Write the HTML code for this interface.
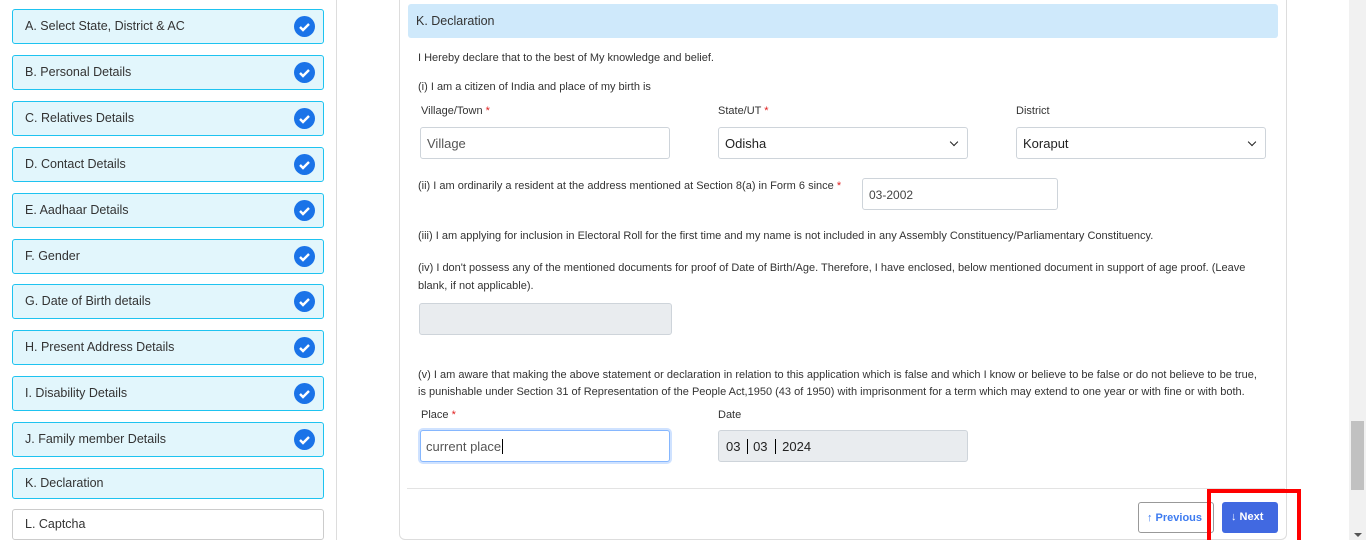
<!DOCTYPE html>
<html><head><style>
*{box-sizing:border-box;margin:0;padding:0}
body{width:1366px;height:540px;overflow:hidden;background:#fff;font-family:"Liberation Sans",Arial,sans-serif;color:#333;position:relative}
.a{position:absolute}
.item{position:absolute;left:12px;width:312px;height:35px;border:1px solid #1ec3f0;background:#e2f6fc;border-radius:3px;font-size:12.5px;color:#333;padding:9px 12px;}
.chk{position:absolute;right:8px;top:6px;width:21px;height:21px;border-radius:50%;background:#1a73e8}
.t{position:absolute;font-size:11px;color:#333;white-space:nowrap}
.lbl{position:absolute;font-size:11px;color:#333}
.req{color:#e02020}
.inp{position:absolute;height:32px;border:1px solid #ced4da;border-radius:3px;background:#fff;font-size:13px;color:#444;padding:8px 6px}
.sel:after{content:"";position:absolute;right:10px;top:11px;width:5px;height:5px;border-right:1.5px solid #222;border-bottom:1.5px solid #222;transform:rotate(45deg)}
</style></head><body>
<div class="item" style="top:9px">A. Select State, District &amp; AC<div class="chk"><svg width="21" height="21"><path d="M6 11l3 3 6-6" stroke="#fff" stroke-width="2.4" fill="none"/></svg></div></div>
<div class="item" style="top:55px">B. Personal Details<div class="chk"><svg width="21" height="21"><path d="M6 11l3 3 6-6" stroke="#fff" stroke-width="2.4" fill="none"/></svg></div></div>
<div class="item" style="top:101px">C. Relatives Details<div class="chk"><svg width="21" height="21"><path d="M6 11l3 3 6-6" stroke="#fff" stroke-width="2.4" fill="none"/></svg></div></div>
<div class="item" style="top:147px">D. Contact Details<div class="chk"><svg width="21" height="21"><path d="M6 11l3 3 6-6" stroke="#fff" stroke-width="2.4" fill="none"/></svg></div></div>
<div class="item" style="top:193px">E. Aadhaar Details<div class="chk"><svg width="21" height="21"><path d="M6 11l3 3 6-6" stroke="#fff" stroke-width="2.4" fill="none"/></svg></div></div>
<div class="item" style="top:239px">F. Gender<div class="chk"><svg width="21" height="21"><path d="M6 11l3 3 6-6" stroke="#fff" stroke-width="2.4" fill="none"/></svg></div></div>
<div class="item" style="top:284px">G. Date of Birth details<div class="chk"><svg width="21" height="21"><path d="M6 11l3 3 6-6" stroke="#fff" stroke-width="2.4" fill="none"/></svg></div></div>
<div class="item" style="top:330px">H. Present Address Details<div class="chk"><svg width="21" height="21"><path d="M6 11l3 3 6-6" stroke="#fff" stroke-width="2.4" fill="none"/></svg></div></div>
<div class="item" style="top:376px">I. Disability Details<div class="chk"><svg width="21" height="21"><path d="M6 11l3 3 6-6" stroke="#fff" stroke-width="2.4" fill="none"/></svg></div></div>
<div class="item" style="top:422px">J. Family member Details<div class="chk"><svg width="21" height="21"><path d="M6 11l3 3 6-6" stroke="#fff" stroke-width="2.4" fill="none"/></svg></div></div>
<div class="item" style="top:468px;height:31px;padding-top:7px">K. Declaration</div>
<div class="item" style="top:509px;height:31px;padding-top:7px;background:#fff;border-color:#ccc">L. Captcha</div>

<div class="a" style="left:336px;top:0;width:1px;height:540px;background:#ddd"></div>
<div class="a" style="left:399px;top:0;width:888px;height:540px;border:1px solid #ddd;border-top:none;border-radius:0 0 6px 6px"></div>
<div class="a" style="left:408px;top:4px;width:870px;height:34px;background:#cfe9fb;border-radius:3px;font-size:12.5px;padding:10px 8px;color:#333">K. Declaration</div>

<div class="t" style="left:418px;top:52px">I Hereby declare that to the best of My knowledge and belief.</div>
<div class="t" style="left:418px;top:81px">(i) I am a citizen of India and place of my birth is</div>
<div class="lbl" style="left:421px;top:105px">Village/Town <span class="req">*</span></div>
<div class="lbl" style="left:718px;top:105px">State/UT <span class="req">*</span></div>
<div class="lbl" style="left:1016px;top:105px">District</div>
<div class="inp" style="left:420px;top:127px;width:250px;color:#555">Village</div>
<div class="inp sel" style="left:718px;top:127px;width:250px;color:#222">Odisha</div>
<div class="inp sel" style="left:1016px;top:127px;width:250px;color:#222">Koraput</div>

<div class="t" style="left:418px;top:180px">(ii) I am ordinarily a resident at the address mentioned at Section 8(a) in Form 6 since <span class="req">*</span></div>
<div class="inp" style="left:862px;top:178px;width:196px;height:32px;font-size:12px;padding-top:9px">03-2002</div>

<div class="t" style="left:418px;top:230px">(iii) I am applying for inclusion in Electoral Roll for the first time and my name is not included in any Assembly Constituency/Parliamentary Constituency.</div>
<div class="t" style="left:418px;top:259px;line-height:18px">(iv) I don't possess any of the mentioned documents for proof of Date of Birth/Age. Therefore, I have enclosed, below mentioned document in support of age proof. (Leave<br>blank, if not applicable).</div>
<div class="inp" style="left:419px;top:303px;width:253px;height:32px;background:#e9ecef"></div>

<div class="t" style="left:418px;top:367px;line-height:17px">(v) I am aware that making the above statement or declaration in relation to this application which is false and which I know or believe to be false or do not believe to be true,<br>is punishable under Section 31 of Representation of the People Act,1950 (43 of 1950) with imprisonment for a term which may extend to one year or with fine or with both.</div>
<div class="lbl" style="left:421px;top:409px">Place <span class="req">*</span></div>
<div class="lbl" style="left:718px;top:409px">Date</div>
<div class="inp" style="left:420px;top:430px;width:250px;border-color:#86b7fe;box-shadow:0 0 0 2px #cfe2ff;color:#555;padding-left:5px">current place<span style="border-left:1px solid #000;margin-left:1px"></span></div>
<div class="inp" style="left:718px;top:430px;width:250px;background:#e9ecef;color:#222;padding-left:7px">03 <span style="border-left:1px solid #000;margin:0 5px 0 3px"></span>03 <span style="border-left:1px solid #000;margin:0 6px 0 4px"></span>2024</div>

<div class="a" style="left:407px;top:488px;width:878px;height:1px;background:#e3e3e3"></div>
<div class="a" style="left:1138px;top:502px;width:76px;height:31px;border:1px solid #999;border-radius:3px;color:#3d7bf0;font-size:11px;font-weight:bold;padding:9px 0 0 8px">&#8593; Previous</div>
<div class="a" style="left:1222px;top:502px;width:56px;height:31px;background:#4169e1;border-radius:3px;color:#fff;font-size:11px;font-weight:bold;padding:9px 0 0 9px">&#8595; Next</div>
<div class="a" style="left:1207px;top:489px;width:94px;height:51px;border:4px solid #f00;border-bottom:none"></div>

<div class="a" style="left:1349px;top:0;width:17px;height:540px;background:#f1f1f1"></div>
<div class="a" style="left:1351px;top:421px;width:13px;height:69px;background:#c1c1c1"></div>
<div class="a" style="left:1354px;top:533px;width:0;height:0;border-left:4px solid transparent;border-right:4px solid transparent;border-top:4px solid #555"></div>
</body></html>
